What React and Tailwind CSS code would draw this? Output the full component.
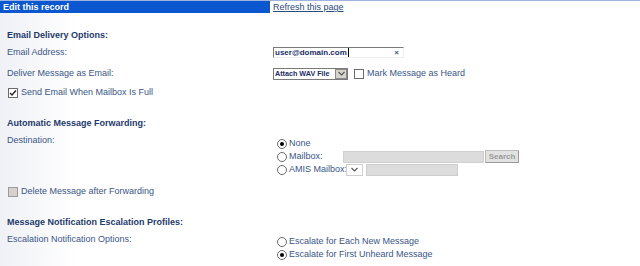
import React from "react";

function Radio({ checked }) {
  return (
    <span className="w-[10px] h-[10px] rounded-full border border-[#6b6b6b] bg-white flex items-center justify-center shrink-0">
      {checked && <span className="w-[4px] h-[4px] rounded-full bg-black" />}
    </span>
  );
}

function Checkbox({ checked, disabled }) {
  return (
    <span
      className={`w-[10px] h-[10px] border border-[#6b6b6b] flex items-center justify-center shrink-0 ${
        disabled ? "bg-[#d6d3ce] border-[#9a9a9a]" : "bg-white"
      }`}
    >
      {checked && (
        <svg width="8" height="8" viewBox="0 0 8 8">
          <path d="M1 4 L3 6 L7 1.5" fill="none" stroke="#222" strokeWidth="1.3" />
        </svg>
      )}
    </span>
  );
}

function Chevron() {
  return (
    <svg width="7" height="5" viewBox="0 0 7 5">
      <path d="M0.5 1 L3.5 4 L6.5 1" fill="none" stroke="#555" strokeWidth="1.1" />
    </svg>
  );
}

function App() {
  return (
    <div
      className="w-[640px] h-[266px] overflow-hidden text-[9px] text-[#3a5687] bg-[linear-gradient(to_right,#f0f1f6,#ffffff_12%)]"
      style={{ fontFamily: '"Liberation Sans", Arial, sans-serif' }}
    >
      <div className="h-[1px] bg-[#9cb4df]" />

      {/* header */}
      <div className="flex h-[12px] items-center">
        <div className="w-[270px] h-full bg-[#0a57cf] text-white font-bold pl-[3px] leading-[12px]">
          Edit this record
        </div>
        <a className="ml-[3px] underline text-[#2b4a7c] leading-[12px] cursor-pointer">
          Refresh this page
        </a>
      </div>

      {/* Email delivery */}
      <div className="mt-[16px] h-[12px] leading-[12px] pl-[7px] font-bold text-[#1e3a6c]">
        Email Delivery Options:
      </div>

      <div className="mt-[5px] flex h-[13px] items-center">
        <div className="w-[273px] pl-[7px]">Email Address:</div>
        <div className="relative w-[131px] h-[11px] bg-white border-t border-l border-[#7a7a7a] border-r border-b border-r-[#eeeeee] border-b-[#eeeeee] flex items-center pl-[1px]">
          <span className="font-bold text-[8px] text-[#1b2d66] leading-none whitespace-nowrap">user@domain.com</span>
          <span className="w-[1px] h-[9px] bg-black ml-[1px]" />
          <span className="absolute right-[4px] top-[-1px] text-[8px] text-[#3a5a8a] font-bold">×</span>
        </div>
      </div>

      <div className="mt-[8px] flex h-[13px] items-center">
        <div className="w-[273px] pl-[7px]">Deliver Message as Email:</div>
        <div className="w-[75px] h-[12px] border border-[#7a7a7a] bg-white flex items-center">
          <span className="flex-1 pl-[1px] font-bold text-[7.2px] text-[#1b2d66] leading-none whitespace-nowrap overflow-hidden">
            Attach WAV File
          </span>
          <span className="w-[12px] h-[10px] shrink-0 bg-[#d6d3ce] border border-[#8a8a8a] flex items-center justify-center">
            <Chevron />
          </span>
        </div>
        <span className="ml-[6px]">
          <Checkbox />
        </span>
        <span className="ml-[3px]">Mark Message as Heard</span>
      </div>

      <div className="mt-[7px] flex h-[12px] items-center pl-[8px] gap-[3px]">
        <Checkbox checked />
        <span>Send Email When Mailbox Is Full</span>
      </div>

      {/* forwarding */}
      <div className="mt-[18px] h-[12px] leading-[12px] pl-[7px] font-bold text-[#1e3a6c]">
        Automatic Message Forwarding:
      </div>

      <div className="mt-[5px] flex">
        <div className="w-[277px] pl-[7px] leading-[12px]">Destination:</div>
        <div className="pt-[4px] flex flex-col">
          <div className="h-[12px] flex items-center gap-[2px]">
            <Radio checked />
            <span>None</span>
          </div>
          <div className="h-[13px] flex items-center">
            <Radio />
            <span className="ml-[2px] w-[54px]">Mailbox:</span>
            <span className="w-[141px] h-[12px] bg-[#dcdcdc] border border-[#cfcfcf]" />
            <span className="ml-[1px] w-[34px] h-[13px] bg-[#e2e2e2] border border-[#bdbdbd] border-r-[#9a9a9a] border-b-[#9a9a9a] text-[8px] text-[#9a9a9a] font-bold flex items-center justify-center">
              Search
            </span>
          </div>
          <div className="h-[13px] flex items-center">
            <Radio />
            <span className="ml-[2px]">AMIS Mailbox:</span>
            <span className="ml-[-1px] w-[17px] h-[12px] bg-white border border-[#cfcfcf] flex items-center justify-center">
              <Chevron />
            </span>
            <span className="ml-[3px] w-[92px] h-[12px] bg-[#dcdcdc] border border-[#cfcfcf]" />
          </div>
        </div>
      </div>

      <div className="mt-[10px] flex h-[12px] items-center pl-[8px] gap-[3px]">
        <Checkbox disabled />
        <span>Delete Message after Forwarding</span>
      </div>

      {/* escalation */}
      <div className="mt-[18px] h-[12px] leading-[12px] pl-[7px] font-bold text-[#1e3a6c]">
        Message Notification Escalation Profiles:
      </div>

      <div className="mt-[5px] flex">
        <div className="w-[277px] pl-[7px] leading-[12px]">Escalation Notification Options:</div>
        <div className="pt-[2px] flex flex-col">
          <div className="h-[13px] flex items-center gap-[2px]">
            <Radio />
            <span>Escalate for Each New Message</span>
          </div>
          <div className="h-[13px] flex items-center gap-[2px]">
            <Radio checked />
            <span>Escalate for First Unheard Message</span>
          </div>
        </div>
      </div>
    </div>
  );
}

export default App;
